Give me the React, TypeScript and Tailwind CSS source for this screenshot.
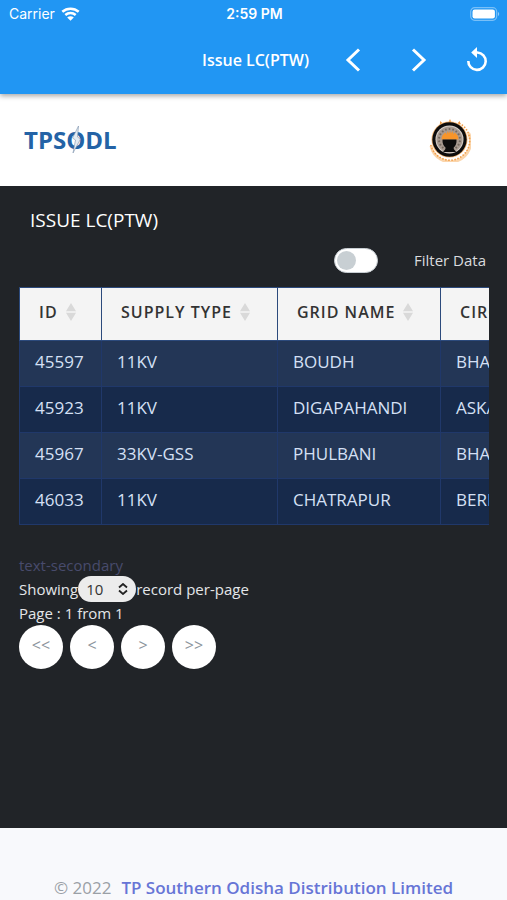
import { useState } from "react";
import { clsx } from "clsx";

interface LineClearance {
  id: number;
  supplyType: string;
  gridName: string;
  circle: string;
}

const COLUMNS = [
  { label: "ID", width: "w-[82px]" },
  { label: "SUPPLY TYPE", width: "w-[176px]" },
  { label: "GRID NAME", width: "w-[163px]" },
  { label: "CIRCLE", width: "w-[150px]" },
];

const ROWS: LineClearance[] = [
  { id: 45597, supplyType: "11KV", gridName: "BOUDH", circle: "BHANJANAGAR" },
  { id: 45923, supplyType: "11KV", gridName: "DIGAPAHANDI", circle: "ASKA" },
  {
    id: 45967,
    supplyType: "33KV-GSS",
    gridName: "PHULBANI",
    circle: "BHANJANAGAR",
  },
  { id: 46033, supplyType: "11KV", gridName: "CHATRAPUR", circle: "BERHAMPUR" },
];

const PAGER = [
  { symbol: "<<", label: "First page" },
  { symbol: "<", label: "Previous page" },
  { symbol: ">", label: "Next page" },
  { symbol: ">>", label: "Last page" },
];

// Ticks on the dial and beads around the lower rim of the emblem
const TICKS = Array.from({ length: 18 }, (_, i) => i * 20);
const BEADS = Array.from({ length: 26 }, (_, i) => 30 + i * 9);

function StatusBar() {
  return (
    <div className="grid h-7 grid-cols-3 items-center pr-[7px] pl-[9px] font-['Inter',sans-serif] text-sm">
      <div className="flex items-center gap-1.5">
        <span>Carrier</span>
        <svg width="19" height="14" viewBox="0 0 19 14" fill="none">
          <path
            d="M1.3 4.8C6 .6 13 .6 17.7 4.8M4.3 8c3-2.700 7.400-2.700 10.400 0"
            stroke="currentColor"
            strokeWidth="2.5"
          />
          <path
            d="M9.5 13.8 6.200 10.600c1.900-1.700 4.700-1.700 6.600 0Z"
            fill="currentColor"
          />
        </svg>
      </div>
      <span className="text-center font-semibold">2:59 PM</span>
      <svg
        className="justify-self-end"
        width="30"
        height="14"
        viewBox="0 0 30 14"
        fill="none"
      >
        <rect
          x=".7"
          y=".7"
          width="26"
          height="12.6"
          rx="4"
          stroke="#fff"
          strokeOpacity=".4"
          strokeWidth="1.2"
        />
        <rect x="2.5" y="2.5" width="22.4" height="9" rx="2.2" fill="#fff" />
        <path d="M28 5v4c1.6-.6 1.6-3.4 0-4Z" fill="#fff" fillOpacity=".5" />
      </svg>
    </div>
  );
}

function AppBar() {
  return (
    <header className="relative h-[94px] bg-[#2196f3] text-white shadow-[0_2px_5px_rgba(0,0,0,0.35)]">
      <StatusBar />
      <div className="flex h-16 items-center justify-end pr-[18px]">
        <h1 className="mr-8 text-base font-semibold">Issue LC(PTW)</h1>
        <button type="button" aria-label="Back" className="mr-[42px]">
          <svg width="24" height="24" viewBox="0 0 24 24" fill="none">
            <path
              d="M18 1.5 7 12l11 10.5"
              stroke="currentColor"
              strokeWidth="3"
            />
          </svg>
        </button>
        <button type="button" aria-label="Forward" className="mr-[34px]">
          <svg width="24" height="24" viewBox="0 0 24 24" fill="none">
            <path
              d="M6 1.5 17 12 6 22.5"
              stroke="currentColor"
              strokeWidth="3"
            />
          </svg>
        </button>
        <button type="button" aria-label="Reload">
          <svg width="24" height="26" viewBox="0 0 24 26" fill="none">
            <path
              d="M10 5.500h2.400A8.700 8.700 0 1 1 3.300 14"
              stroke="currentColor"
              strokeWidth="2.6"
            />
            <path d="M12 0v11L6.200 5.500Z" fill="currentColor" />
          </svg>
        </button>
      </div>
    </header>
  );
}

function Emblem() {
  return (
    <svg width="42" height="44" viewBox="0 0 42 44" role="img" aria-label="Emblem">
      <path
        d="M39.500 15A20 20 0 1 1 2 28"
        fill="none"
        stroke="#fbd5ab"
        strokeWidth="3"
      />
      {BEADS.map((angle) => (
        <circle
          key={angle}
          cx="21"
          cy="2.800"
          r=".9"
          fill="#f3a04a"
          transform={`rotate(${angle} 21 22.500)`}
        />
      ))}
      <path
        d="M19.600 4 21 1l1.400 3ZM10.800 6.500l.4-3.500 2.400 2.200ZM31.200 6.500l-.4-3.500-2.400 2.200Z"
        fill="#ee9a45"
      />
      <circle cx="20.5" cy="21.5" r="18" fill="#f6b877" />
      <circle cx="20.5" cy="21.5" r="17.2" fill="#0d0c0c" />
      <circle cx="20.5" cy="21.5" r="14" fill="#d8d0c9" />
      <circle cx="20.5" cy="21.5" r="13" fill="#a89a90" />
      {TICKS.map((angle) => (
        <path
          key={angle}
          d="M20.500 10v2"
          stroke="#75695f"
          strokeWidth="1.6"
          transform={`rotate(${angle} 20.500 21.500)`}
        />
      ))}
      <path
        d="M12.500 21.500c0-4 2-6 4.300-7l.8 2 .9-3.500 1.500 2.500 1-3 1 3 1.500-2.500.9 3.500.8-2c2.300 1 4.300 3 4.300 7Z"
        fill="#f7952a"
      />
      <path
        d="M13.500 21.500h14c.3 4-1 6.500-2.800 8v1.500l2.500 3H14l2.500-3v-1.500c-1.800-1.500-3.300-4-3-8Z"
        fill="#0d0c0c"
      />
    </svg>
  );
}

function BrandBar() {
  return (
    <div className="flex h-[92px] items-center justify-between bg-white pr-9 pl-6">
      <span className="relative text-2xl font-bold text-[#2463a6]">
        TPSODL
        {/* lightning bolt across the O */}
        <svg
          className="absolute top-0.5 left-[46px]"
          width="12"
          height="28"
          viewBox="0 0 12 28"
        >
          <path
            d="M8.500 0 2.500 12l3 2L3 27l7.500-14-3-2Z"
            fill="#e4ebf2"
            stroke="#7c92ad"
            strokeWidth=".6"
          />
        </svg>
      </span>
      <Emblem />
    </div>
  );
}

function SortIcon() {
  return (
    <svg width="10" height="18" viewBox="0 0 10 18" fill="#d9d9d9">
      <path d="M5 0 10 8.200H0ZM5 18 0 9.800h10Z" />
    </svg>
  );
}

function ClearanceTable() {
  return (
    <div className="overflow-x-auto [scrollbar-width:none]">
      <table className="w-[571px] table-fixed border-collapse text-left">
        <thead>
          <tr className="h-[53px] bg-[#f4f4f4] text-[#333]">
            {COLUMNS.map(({ label, width }) => (
              <th
                key={label}
                className={clsx(
                  "border border-[#2c4a7c] pb-1 pl-[19px] font-semibold",
                  width,
                )}
              >
                <span className="flex items-center gap-2 text-base tracking-[1px] whitespace-nowrap">
                  {label}
                  <SortIcon />
                </span>
              </th>
            ))}
          </tr>
        </thead>
        <tbody className="text-[17px] text-[#d5e0f5]">
          {ROWS.map((row) => (
            <tr
              key={row.id}
              className="h-[46px] odd:bg-[#233656] even:bg-[#172a4b]"
            >
              {[row.id, row.supplyType, row.gridName, row.circle].map(
                (cell, i) => (
                  <td
                    key={COLUMNS[i].label}
                    className="border border-[#20386a] pb-1 pl-[15px]"
                  >
                    {cell}
                  </td>
                ),
              )}
            </tr>
          ))}
        </tbody>
      </table>
    </div>
  );
}

function Pagination() {
  const [pageSize, setPageSize] = useState("10");

  return (
    <div className="mt-7 text-[15px] text-[#e4e6e9]">
      <p className="leading-6 text-[#484b6c]">text-secondary</p>
      <div className="flex h-6 items-center">
        <label htmlFor="page-size">Showing</label>
        <span className="relative">
          <select
            id="page-size"
            value={pageSize}
            onChange={(event) => setPageSize(event.target.value)}
            className="block h-[26px] w-[58px] appearance-none rounded-full bg-[#ececec] pl-2 text-[15px] text-[#333]"
          >
            <option>10</option>
            <option>25</option>
            <option>50</option>
          </select>
          <svg
            className="pointer-events-none absolute top-[7px] right-2"
            width="10"
            height="12"
            viewBox="0 0 10 12"
            fill="none"
            stroke="#222"
            strokeWidth="1.8"
          >
            <path d="m1 4.500 4-3.500 4 3.500M1 7.500 5 11l4-3.500" />
          </svg>
        </span>
        <span>record per-page</span>
      </div>
      <p className="leading-6">Page : 1 from 1</p>
      <div className="flex gap-[7px]">
        {PAGER.map(({ symbol, label }) => (
          <button
            key={label}
            type="button"
            aria-label={label}
            className="size-11 rounded-full bg-white pb-1 text-base text-[#8c949c]"
          >
            {symbol}
          </button>
        ))}
      </div>
    </div>
  );
}

export default function App() {
  const [filtering, setFiltering] = useState(false);

  return (
    <div className="flex min-h-screen flex-col bg-[#212428] font-['Open_Sans',sans-serif]">
      <AppBar />
      <BrandBar />

      <main className="flex-1 pr-[18px] pl-[19px]">
        <h2 className="mt-5 ml-[11px] text-[19px] leading-7 font-medium text-white">
          ISSUE LC(PTW)
        </h2>
        <div className="my-3.5 flex h-[25px] items-center justify-end gap-9 pr-[3px]">
          <input
            id="filter-data"
            type="checkbox"
            checked={filtering}
            onChange={(event) => setFiltering(event.target.checked)}
            className="h-[25px] w-11 appearance-none rounded-full border border-[#c8ced3] bg-white p-0.5 before:block before:size-[19px] before:rounded-full before:bg-[#c8cfd3] checked:before:ml-auto"
          />
          <label htmlFor="filter-data" className="text-[15px] text-[#d9dbde]">
            Filter Data
          </label>
        </div>
        <ClearanceTable />
        <Pagination />
      </main>

      <footer className="bg-[#f8f9fc] pt-12 text-center text-[17px] leading-6 whitespace-nowrap text-[#9aa0a6]">
        © 2022
        <a href="#" className="ml-2.5 font-semibold text-[#6775d6]">
          TP Southern Odisha Distribution Limited
        </a>
      </footer>
    </div>
  );
}
